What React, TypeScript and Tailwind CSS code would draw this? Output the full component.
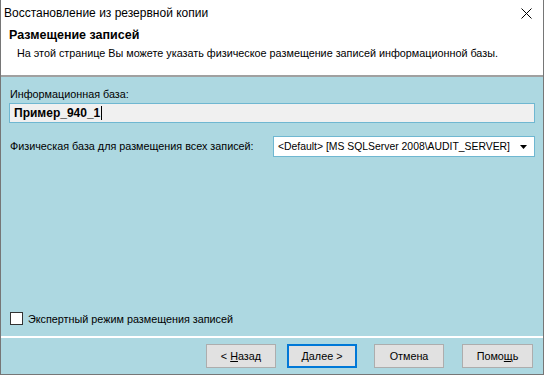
import { useState } from 'react';

export default function App() {
  const [expert, setExpert] = useState(false);

  return (
    <div
      className="w-[544px] h-[375px] flex flex-col bg-white border-x border-b border-[#767676] text-[10.8px] text-black overflow-hidden select-none whitespace-nowrap"
      style={{ fontFamily: '"Liberation Sans", Arial, sans-serif' }}
    >
      {/* title bar */}
      <div className="h-[26px] flex items-center justify-between pl-[3px] pr-[8px] shrink-0">
        <span className="text-[12px]">Восстановление из резервной копии</span>
        <svg width="11" height="11" viewBox="0 0 11 11" className="mr-[3px]">
          <path d="M0.5 0.5 L10.5 10.5 M10.5 0.5 L0.5 10.5" stroke="#000" strokeWidth="1" />
        </svg>
      </div>

      {/* header */}
      <div className="h-[51px] pl-[8px] border-b-2 border-[#a0a0a0] shrink-0">
        <div className="font-bold text-[12.5px] leading-[18px]">Размещение записей</div>
        <div className="pl-[8px] leading-[18px]">
          На этой странице Вы можете указать физическое размещение записей информационной базы.
        </div>
      </div>

      {/* content */}
      <div className="flex-1 flex flex-col bg-[#add8e1] px-[8px] pt-[9px]">
        <div className="leading-[16px] pl-[1px]">Информационная база:</div>
        <div className="mt-[1px] h-[20px] flex items-center bg-[#f0f0f0] border border-[#6fb7d1] pl-[4px] font-bold text-[12px]">
          Пример_940_1<span className="inline-block w-[1px] h-[14px] bg-black ml-[1px]" />
        </div>

        <div className="mt-[13px] flex items-center justify-between">
          <span className="pl-[1px]">Физическая база для размещения всех записей:</span>
          <div className="w-[262px] h-[21px] flex items-center justify-between bg-white border border-[#6fb7d1] pl-[4px] pr-[7px]">
            <span className="text-[10.4px]">&lt;Default&gt; [MS SQLServer 2008\AUDIT_SERVER]</span>
            <svg width="7" height="4" viewBox="0 0 7 4">
              <path d="M0 0 L7 0 L3.5 4 Z" fill="#000" />
            </svg>
          </div>
        </div>

        <div className="flex-1" />

        <label className="flex items-center gap-[5px] mb-[9px] pl-[1px]">
          <input
            type="checkbox"
            checked={expert}
            onChange={(e) => setExpert(e.target.checked)}
            className="appearance-none w-[13px] h-[13px] bg-white border border-[#333] m-0"
          />
          <span>Экспертный режим размещения записей</span>
        </label>
      </div>

      {/* footer */}
      <div className="h-[38px] bg-[#add8e1] border-t-2 border-white flex items-center justify-end pr-[10px] gap-[11px] shrink-0">
        <button className="w-[70px] h-[24px] bg-[#e1e1e1] border border-[#adadad] flex items-center justify-center">
          &lt; <span className="underline ml-[3px]">Н</span>азад
        </button>
        <button className="w-[70px] h-[24px] bg-[#e1e1e1] border-2 border-[#0078d7] flex items-center justify-center mr-[6px]">
          <span className="underline">Д</span>алее &gt;
        </button>
        <button className="w-[70px] h-[24px] bg-[#e1e1e1] border border-[#adadad] flex items-center justify-center mr-[7px]">
          Отмена
        </button>
        <button className="w-[71px] h-[24px] bg-[#e1e1e1] border border-[#adadad] flex items-center justify-center">
          Помо<span className="underline">щ</span>ь
        </button>
      </div>
    </div>
  );
}
